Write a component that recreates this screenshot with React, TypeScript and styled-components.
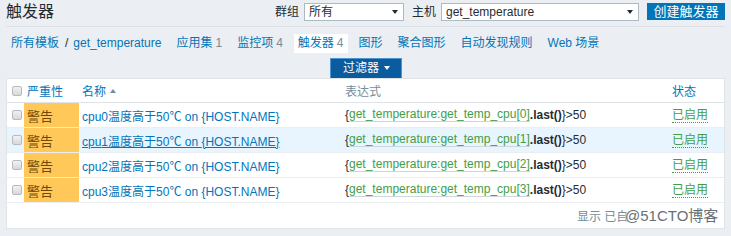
import React from "react";
import styled, { createGlobalStyle } from "styled-components";

const Global = createGlobalStyle`
  html, body { margin: 0; padding: 0; }
  body {
    background: #ebeef2;
    font-family: "Liberation Sans", Arial, "Noto Sans CJK SC", sans-serif;
    font-size: 12px;
    color: #1f2c33;
  }
`;

const Page = styled.div`
  padding: 0 6px;
  width: 719px;
`;

const Header = styled.div`
  display: flex;
  align-items: center;
  height: 18px;
  padding: 3px 0 5px;
  border-bottom: 1px solid #dde1e6;
`;

const Title = styled.h1`
  margin: 0 auto 0 0;
  font-size: 16px;
  font-weight: normal;
  line-height: 18px;
  color: #1f2c33;
`;

const Label = styled.span`
  font-size: 12px;
  margin: 0 5px 0 0;
  line-height: 18px;
`;

const Select = styled.div<{ $w: number }>`
  position: relative;
  box-sizing: border-box;
  width: ${(p) => p.$w}px;
  height: 18px;
  background: #fff;
  border: 1px solid #acbbc2;
  padding: 0 14px 0 4px;
  line-height: 16px;
  font-size: 12px;
  margin-right: 8px;
  color: #1f2c33;
  overflow: hidden;
  white-space: nowrap;
  &::after {
    content: "";
    position: absolute;
    right: 5px;
    top: 6px;
    border-left: 3px solid transparent;
    border-right: 3px solid transparent;
    border-top: 4px solid #1f2c33;
  }
`;

const PrimaryButton = styled.button`
  box-sizing: border-box;
  height: 17px;
  width: 78px;
  background: #0275b8;
  border: none;
  color: #fff;
  font-family: inherit;
  font-size: 13px;
  line-height: 17px;
  padding: 0;
  margin-top: -1px;
`;

const Nav = styled.nav`
  display: flex;
  gap: 7px;
  margin-top: 7px;
  padding-left: 1px;
`;

const NavItem = styled.a<{ $active?: boolean }>`
  display: block;
  height: 19px;
  line-height: 19px;
  padding: 0 4px;
  color: #0275b8;
  text-decoration: none;
  background: ${(p) => (p.$active ? "#fff" : "transparent")};
`;

const Count = styled.span`
  color: #768d99;
  margin-left: 3px;
`;

const Sep = styled.span`
  color: #1f2c33;
  margin: 0 5px 0 6px;
`;

const FilterRow = styled.div`
  display: flex;
  justify-content: center;
  margin-top: 5px;
`;

const FilterTab = styled.div`
  box-sizing: border-box;
  width: 72px;
  height: 20px;
  background: #0a5c9e;
  border: 1px solid #4f93cf;
  border-bottom: none;
  color: #fff;
  font-size: 12px;
  line-height: 19px;
  text-align: center;
  padding-left: 2px;
`;

const Caret = styled.span`
  display: inline-block;
  margin-left: 5px;
  vertical-align: middle;
  border-left: 3.5px solid transparent;
  border-right: 3.5px solid transparent;
  border-top: 4px solid #fff;
  position: relative;
  top: -1px;
`;

const Panel = styled.div`
  background: #fff;
  border: 1px solid #dfe4e7;
  height: 149px;
  display: flex;
  flex-direction: column;
`;

const Row = styled.div<{ $head?: boolean; $hover?: boolean }>`
  display: grid;
  grid-template-columns: 17px 55px 263px 327px 1fr;
  height: ${(p) => (p.$head ? 23 : 24)}px;
  border-bottom: 1px solid ${(p) => (p.$head ? "#dfe4e7" : "#ebeef0")};
  background: ${(p) => (p.$hover ? "#e8f5ff" : "transparent")};
`;

const Cell = styled.div<{ $color?: string }>`
  display: flex;
  align-items: center;
  padding-left: 3px;
  white-space: nowrap;
  color: ${(p) => p.$color || "#1f2c33"};
`;

const CheckCell = styled.div`
  display: flex;
  align-items: center;
  justify-content: center;
  padding-left: 3px;
`;

const Check = styled.span`
  box-sizing: border-box;
  width: 10px;
  height: 10px;
  border: 1px solid #b4bcc1;
  border-radius: 2px;
  background: linear-gradient(#f2f2f2, #d8d8d8);
`;

const Severity = styled(Cell)`
  background: #ffc859;
  color: #6f4a06;
  font-size: 13px;
`;

const SortArrow = styled.span`
  display: inline-block;
  margin-left: 4px;
  border-left: 3.5px solid transparent;
  border-right: 3.5px solid transparent;
  border-bottom: 4px solid #768d99;
`;

const NameLink = styled.a<{ $under?: boolean }>`
  color: #0275b8;
  text-decoration: ${(p) => (p.$under ? "underline" : "none")};
`;

const ItemLink = styled.a`
  color: #429e47;
  text-decoration: none;
  border-bottom: 1px solid #cfd6da;
  line-height: 13px;
`;

const Func = styled.b`
  color: #1f2c33;
`;

const StatusLink = styled.a`
  color: #429e47;
  text-decoration: none;
  border-bottom: 1px dotted #429e47;
  line-height: 14px;
`;

const Footer = styled.div`
  position: relative;
  height: 25px;
  display: flex;
  align-items: center;
  padding-left: 570px;
  color: #768d99;
  font-size: 12px;
  white-space: nowrap;
`;

const Watermark = styled.span`
  position: absolute;
  left: 618px;
  top: 4px;
  font-size: 15px;
  line-height: 17px;
  color: #4f575c;
  text-shadow: 0 0 1px #fff, 0 0 2px #fff, 0 0 2px #fff;
  opacity: 0.85;
`;

const rows = [0, 1, 2, 3];

export default function App() {
  return (
    <>
      <Global />
      <Page>
        <Header>
          <Title>触发器</Title>
          <Label>群组</Label>
          <Select $w={100}>所有</Select>
          <Label>主机</Label>
          <Select $w={198}>get_temperature</Select>
          <PrimaryButton>创建触发器</PrimaryButton>
        </Header>
        <Nav>
          <NavItem>
            所有模板<Sep>/</Sep>get_temperature
          </NavItem>
          <NavItem>
            应用集<Count>1</Count>
          </NavItem>
          <NavItem>
            监控项<Count>4</Count>
          </NavItem>
          <NavItem $active>
            触发器<Count>4</Count>
          </NavItem>
          <NavItem>图形</NavItem>
          <NavItem>聚合图形</NavItem>
          <NavItem>自动发现规则</NavItem>
          <NavItem>Web 场景</NavItem>
        </Nav>
        <FilterRow>
          <FilterTab>
            过滤器<Caret />
          </FilterTab>
        </FilterRow>
        <Panel>
          <Row $head>
            <CheckCell>
              <Check />
            </CheckCell>
            <Cell $color="#0275b8">严重性</Cell>
            <Cell $color="#0275b8">
              名称<SortArrow />
            </Cell>
            <Cell $color="#768d99">表达式</Cell>
            <Cell $color="#0275b8">状态</Cell>
          </Row>
          {rows.map((i) => (
            <Row key={i} $hover={i === 1}>
              <CheckCell>
                <Check />
              </CheckCell>
              <Severity>警告</Severity>
              <Cell>
                <NameLink $under={i === 1}>
                  cpu{i}温度高于50℃ on {"{HOST.NAME}"}
                </NameLink>
              </Cell>
              <Cell>
                {"{"}
                <ItemLink>get_temperature:get_temp_cpu[{i}]</ItemLink>
                <Func>.last()</Func>
                {"}>50"}
              </Cell>
              <Cell>
                <StatusLink>已启用</StatusLink>
              </Cell>
            </Row>
          ))}
          <Footer>
            显示 已自
            <Watermark>@51CTO博客</Watermark>
          </Footer>
        </Panel>
      </Page>
    </>
  );
}
